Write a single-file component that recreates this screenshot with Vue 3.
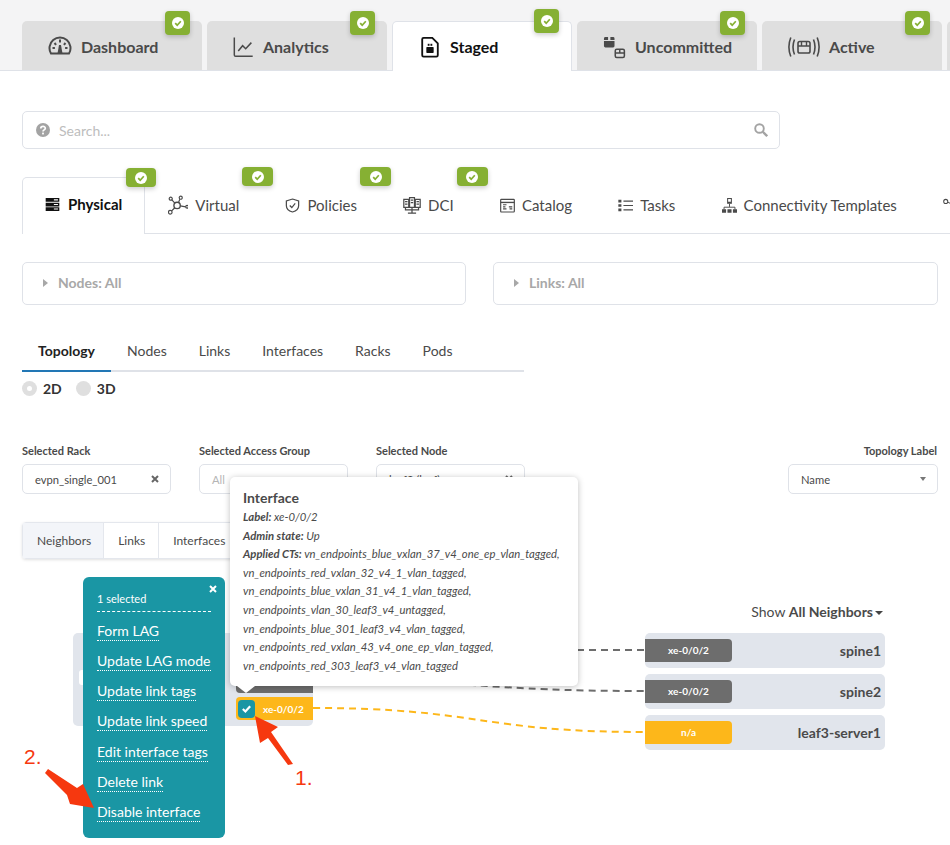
<script setup>
const icons = {
  dashboard: '<path d="M3 18.500A10.500 10.500 0 1 1 21 18.500Z" fill="none" stroke="currentColor" stroke-width="2"/><path d="M12 10l-1 0-1.500 8.500h5L13 10Z" fill="currentColor"/><path d="M12 4.500v3M6.500 8l1.600 1.800M17.500 8l-1.600 1.800M4.500 13h2.400M17.100 13h2.400" stroke="currentColor" stroke-width="2"/>',
  analytics: '<path d="M1.500 1V21a1.500 1.500 0 0 0 1.500 1.500H22.500" fill="none" stroke="currentColor" stroke-width="1.700"/><path d="M6 16.500l5-6 3.500 3.500L21 7" fill="none" stroke="currentColor" stroke-width="1.700"/>',
  staged: '<path d="M5 2h9.500L20.500 8v13a1.500 1.500 0 0 1-1.500 1.500H5A1.500 1.500 0 0 1 3.500 21V3.500A1.500 1.500 0 0 1 5 2Z" fill="none" stroke="currentColor" stroke-width="2"/><rect x="8" y="12" width="8" height="6.500" rx=".8" fill="currentColor"/><rect x="9.500" y="8.500" width="2" height="2.200" fill="currentColor"/><rect x="12.500" y="8.500" width="2" height="2.200" fill="currentColor"/>',
  uncommitted: '<path d="M1 5.800h11v5.200a1.500 1.500 0 0 1-1.500 1.500h-8A1.500 1.500 0 0 1 1 11ZM2.500 1.500h2.800v3.200H1V3A1.500 1.500 0 0 1 2.500 1.500ZM7.700 1.500h2.800A1.500 1.500 0 0 1 12 3v1.700H7.700Z" fill="currentColor"/><rect x="12.800" y="14.300" width="9.500" height="8.700" rx="1.500" fill="none" stroke="currentColor" stroke-width="1.600"/><path d="M13 18.200h9M17.500 14.300v3.900" stroke="currentColor" stroke-width="1.500"/>',
  active: '<rect x="10" y="6.500" width="12" height="11.500" rx="1.800" fill="none" stroke="currentColor" stroke-width="1.600"/><path d="M10 11h12M13.500 6.500V11M18.500 6.500V11" stroke="currentColor" stroke-width="1.400"/><path d="M6.500 4.500Q3.500 12 6.500 19.500M2.800 2.500Q-1 12 2.800 21.500M25.500 4.500Q28.500 12 25.500 19.500M29.200 2.500Q33 12 29.200 21.500" fill="none" stroke="currentColor" stroke-width="1.600"/>',
  physical: '<path d="M2 2.500h20v5.500H2ZM2 9.300h20v5.500H2ZM2 16h20v5.500H2Z" fill="currentColor"/><path d="M14 5.200h6M14 12h6M14 18.700h6" stroke="#fff" stroke-width="1.600"/>',
  virtual: '<circle cx="11" cy="12.500" r="3.500" fill="none" stroke="currentColor" stroke-width="1.500"/><circle cx="4" cy="5" r="1.700" fill="none" stroke="currentColor" stroke-width="1.300"/><circle cx="3.500" cy="20" r="2" fill="none" stroke="currentColor" stroke-width="1.300"/><circle cx="15" cy="4" r="1.700" fill="none" stroke="currentColor" stroke-width="1.300"/><circle cx="22" cy="14" r="1.500" fill="none" stroke="currentColor" stroke-width="1.300"/><path d="M5 6l3.500 4M5 18.500l3.500-3.500M14 5.500L12.500 9.500M14.500 13L20.500 14" stroke="currentColor" stroke-width="1.300"/>',
  policies: '<path d="M12 2.500l9 2.800v7c0 4.800-4 7.700-9 9.200-5-1.500-9-4.400-9-9.200v-7Z" fill="none" stroke="currentColor" stroke-width="1.800"/><path d="M8 12l3 3 5-6" fill="none" stroke="currentColor" stroke-width="1.800"/>',
  dci: '<path d="M2 5h6v10H2ZM9 3h6v12H9ZM16 5h6v10h-6ZM12 15v7M7 22h10M4 15v3h16v-3" fill="none" stroke="currentColor" stroke-width="1.500"/><path d="M3.500 8h3M3.500 11h3M10.500 6h3M10.500 9h3M17.500 8h3M17.500 11h3" stroke="currentColor" stroke-width="1.500"/>',
  catalog: '<rect x="2" y="3" width="20" height="18.500" rx="1" fill="none" stroke="currentColor" stroke-width="1.700"/><path d="M2 7.500h20" stroke="currentColor" stroke-width="2"/><path d="M5.500 11h5M5.500 14h3.500M5.500 17h5M14 14h5M15 17h4" stroke="currentColor" stroke-width="1.600"/>',
  tasks: '<path d="M1.500 3.500h4.500v4H1.500ZM1.500 10h4.500v4H1.500ZM1.500 16.500h4.500v4H1.500Z" fill="currentColor"/><path d="M9 5.500h14M9 12h14M9 18.500h14" stroke="currentColor" stroke-width="1.800"/>',
  templates: '<rect x="8.500" y="1" width="7" height="8.500" fill="currentColor"/><rect x="10" y="2.500" width="4" height="4" fill="#fff"/><path d="M12 9.500v4.500M4 18v-3.500h16V18" fill="none" stroke="currentColor" stroke-width="1.400"/><path d="M1 17.500h6v5H1ZM9 17.500h6v5H9ZM17 17.500h6v5h-6Z" fill="currentColor"/>',
  share: '<circle cx="5" cy="6" r="3" fill="none" stroke="currentColor" stroke-width="1.500"/><path d="M8 7l6 3" stroke="currentColor" stroke-width="1.500"/>',
}

const mainTabs = [
  { label: 'Dashboard', icon: 'dashboard', w: 24 },
  { label: 'Analytics', icon: 'analytics', w: 21 },
  { label: 'Staged', icon: 'staged', w: 22 },
  { label: 'Uncommitted', icon: 'uncommitted', w: 23 },
  { label: 'Active', icon: 'active', w: 32, box: '0 0 32 24' },
]

const subTabs = [
  { label: 'Physical', icon: 'physical', w: 15, active: true, badge: true },
  { label: 'Virtual', icon: 'virtual', w: 20, badge: true },
  { label: 'Policies', icon: 'policies', w: 15, badge: true },
  { label: 'DCI', icon: 'dci', w: 18, badge: true },
  { label: 'Catalog', icon: 'catalog', w: 15 },
  { label: 'Tasks', icon: 'tasks', w: 15 },
  { label: 'Connectivity Templates', icon: 'templates', w: 15 },
  { label: '', icon: 'share', w: 15 },
]

const viewTabs = ['Topology', 'Nodes', 'Links', 'Interfaces', 'Racks', 'Pods']

const cts = [
  'vn_endpoints_red_vxlan_32_v4_1_vlan_tagged,',
  'vn_endpoints_blue_vxlan_31_v4_1_vlan_tagged,',
  'vn_endpoints_vlan_30_leaf3_v4_untagged,',
  'vn_endpoints_blue_301_leaf3_v4_vlan_tagged,',
  'vn_endpoints_red_vxlan_43_v4_one_ep_vlan_tagged,',
  'vn_endpoints_red_303_leaf3_v4_vlan_tagged',
]

const actions = [
  'Form LAG',
  'Update LAG mode',
  'Update link tags',
  'Update link speed',
  'Edit interface tags',
  'Delete link',
  'Disable interface',
]

const neighbors = [
  { name: 'spine1', port: 'xe-0/0/2', top: 73 },
  { name: 'spine2', port: 'xe-0/0/2', top: 114 },
  { name: 'leaf3-server1', port: 'n/a', top: 155, warn: true },
]
</script>

<template>
  <div class="page">
    <header class="top-bar">
      <div
        v-for="(tab, i) in mainTabs"
        :key="tab.label"
        class="main-tab"
        :class="{ active: i === 2 }"
      >
        <svg :width="tab.w" height="24" :viewBox="tab.box || '0 0 24 24'" class="main-icon" v-html="icons[tab.icon]"></svg>
        <span>{{ tab.label }}</span>
        <span class="badge main-badge">
          <svg viewBox="0 0 12 12" class="check"><circle cx="6" cy="6" r="6" fill="#fff" /><path d="M3.200 6.200l2 2 3.600-4" fill="none" stroke="#86b033" stroke-width="1.700" /></svg>
        </span>
      </div>
      <div class="main-tab stub"></div>
    </header>

    <main class="content">
      <div class="search">
        <svg class="help" viewBox="0 0 14 14">
          <circle cx="7" cy="7" r="7" fill="#a3a3a3" />
          <path d="M4.800 5.400C4.800 2.800 9.300 2.800 9.300 5.300 9.300 6.900 7 6.900 7 8.500" fill="none" stroke="#fff" stroke-width="1.700" />
          <rect x="6.100" y="9.600" width="1.800" height="1.800" fill="#fff" />
        </svg>
        <span class="search-text">Search...</span>
        <svg class="glass" viewBox="0 0 14 14">
          <circle cx="5.500" cy="5.500" r="4.300" fill="none" stroke="#a3a3a3" stroke-width="1.900" />
          <path d="M8.800 8.800l4.400 4.400" stroke="#a3a3a3" stroke-width="2.300" />
        </svg>
      </div>

      <nav class="sub-tabs">
        <div
          v-for="tab in subTabs"
          :key="tab.icon"
          class="sub-tab"
          :class="{ active: tab.active }"
        >
          <svg :width="tab.w" :height="tab.w" viewBox="1 1 22 22" class="sub-icon" v-html="icons[tab.icon]"></svg>
          <span v-if="tab.label">{{ tab.label }}</span>
          <span v-if="tab.badge" class="badge sub-badge">
            <svg viewBox="0 0 12 12" class="check"><circle cx="6" cy="6" r="6" fill="#fff" /><path d="M3.200 6.200l2 2 3.600-4" fill="none" stroke="#86b033" stroke-width="1.700" /></svg>
          </span>
        </div>
      </nav>

      <div class="filters">
        <div class="filter"><i class="caret"></i>Nodes: All</div>
        <div class="filter"><i class="caret"></i>Links: All</div>
      </div>

      <nav class="view-tabs">
        <span
          v-for="(tab, i) in viewTabs"
          :key="tab"
          class="view-tab"
          :class="{ active: i === 0 }"
        >{{ tab }}</span>
      </nav>

      <div class="radios">
        <span class="radio on"></span><b>2D</b>
        <span class="radio"></span><b>3D</b>
      </div>

      <div class="selectors">
        <label class="field">
          <span class="field-label">Selected Rack</span>
          <span class="input">evpn_single_001<svg class="clear" viewBox="0 0 8 8"><path d="M1 1l6 6M7 1L1 7" stroke="#666" stroke-width="2" /></svg></span>
        </label>
        <label class="field">
          <span class="field-label">Selected Access Group</span>
          <span class="input muted">All</span>
        </label>
        <label class="field">
          <span class="field-label">Selected Node</span>
          <span class="input">leaf3 (leaf)<svg class="clear" viewBox="0 0 8 8"><path d="M1 1l6 6M7 1L1 7" stroke="#666" stroke-width="2" /></svg></span>
        </label>
        <label class="field last">
          <span class="field-label">Topology Label</span>
          <span class="input">Name<i class="select-caret"></i></span>
        </label>
      </div>

      <div class="btn-group">
        <span class="btn active">Neighbors</span>
        <span class="btn">Links</span>
        <span class="btn">Interfaces</span>
      </div>
    </main>

    <section class="canvas">
      <div class="show">Show <b>All Neighbors</b><i class="select-caret dark"></i></div>

      <svg class="wires" width="950" height="285" viewBox="0 0 950 285">
        <path d="M313 90H645" class="wire" />
        <path d="M313 120C479 120 479 131 645 131" class="wire" />
        <path d="M313 148C479 148 479 172 645 172" class="wire warn" />
      </svg>

      <div class="node source">
        <span class="chip-stub"></span>
        <span class="port grey"></span>
        <span class="port yellow">
          <span class="tick"><svg viewBox="0 0 12 12"><path d="M2 6.500l2.800 2.700L10 3.500" fill="none" stroke="#fff" stroke-width="2.400" /></svg></span>
          xe-0/0/2
        </span>
      </div>

      <div
        v-for="n in neighbors"
        :key="n.name"
        class="node target"
        :style="{ top: n.top + 'px' }"
      >
        <span class="target-port" :class="{ warn: n.warn }">{{ n.port }}</span>
        <span class="target-name">{{ n.name }}</span>
      </div>

      <aside class="tooltip">
        <h4>Interface</h4>
        <p><b>Label:</b> xe-0/0/2</p>
        <p><b>Admin state:</b> Up</p>
        <p><b>Applied CTs:</b> vn_endpoints_blue_vxlan_37_v4_one_ep_vlan_tagged,</p>
        <p v-for="ct in cts" :key="ct">{{ ct }}</p>
      </aside>

      <aside class="actions">
        <svg class="close" viewBox="0 0 8 8"><path d="M1 1l6 6M7 1L1 7" stroke="#fff" stroke-width="2" /></svg>
        <div class="selected">1 selected</div>
        <div v-for="a in actions" :key="a" class="action"><span>{{ a }}</span></div>
      </aside>

      <svg class="arrows" width="950" height="285" viewBox="0 0 950 285">
        <path d="M255 156L278 167 271 172 293 204 288 205 268 178 260 183Z" fill="#f6380f" />
        <path d="M94 248L70 244 67 235 45 213 48 209 77 228 83 224Z" fill="#f6380f" />
      </svg>
      <span class="step step-one">1.</span>
      <span class="step step-two">2.</span>
    </section>
  </div>
</template>

<style scoped>
.page {
  width: 950px;
  height: 845px;
  overflow: hidden;
  background: #fff;
  color: #4a4a4a;
  font-family: Lato, "Liberation Sans", sans-serif;
}

/* top tabs */
.top-bar {
  display: flex;
  align-items: flex-end;
  gap: 5px;
  height: 70px;
  padding-left: 22px;
  background: #f4f4f5;
  border-bottom: 1px solid #dfe2e8;
  box-sizing: content-box;
}

.main-tab {
  position: relative;
  display: flex;
  flex: 0 0 180px;
  align-items: center;
  gap: 9px;
  box-sizing: border-box;
  height: 49px;
  padding: 2px 0 0 26px;
  background: #dfdfdf;
  border-radius: 5px 5px 0 0;
  font-size: 16px;
  font-weight: 700;
  color: #4a4a4a;
}

.main-tab.active {
  height: 50px;
  margin-bottom: -1px;
  padding-bottom: 2px;
  background: #fff;
  border: 1px solid #dfe2e8;
  border-bottom: 0;
  color: #111;
}

.main-tab.stub {
  flex-basis: 20px;
  padding: 0;
}

.main-icon {
  flex: none;
}

.badge {
  position: absolute;
  display: flex;
  align-items: center;
  justify-content: center;
  background: #86b033;
  border-radius: 4px;
  box-shadow: 0 2px 5px rgba(0, 0, 0, 0.2);
}

.main-badge {
  top: -10px;
  right: 12px;
  width: 25px;
  height: 24px;
}

.main-tab.active .main-badge {
  top: -13px;
}

.check {
  width: 12px;
  height: 12px;
}

/* search */
.content {
  padding: 40px 0 0 22px;
}

.search {
  display: flex;
  align-items: center;
  box-sizing: border-box;
  width: 758px;
  height: 38px;
  padding: 0 11px 0 13px;
  border: 1px solid #dfe2e8;
  border-radius: 5px;
}

.help {
  width: 14px;
  height: 14px;
}

.search-text {
  margin-left: 9px;
  font-size: 14px;
  color: #bdbdbd;
}

.glass {
  width: 14px;
  height: 14px;
  margin-left: auto;
}

/* second tabs */
.sub-tabs {
  display: flex;
  height: 57px;
  margin-top: 28px;
  border-bottom: 1px solid #dfe2e8;
  box-sizing: border-box;
}

.sub-tab {
  position: relative;
  display: flex;
  align-items: center;
  gap: 7px;
  padding: 0 23.100px;
  font-size: 15px;
  white-space: nowrap;
}

.sub-tab.active {
  gap: 8px;
  height: 57px;
  padding: 0 22px 4px;
  background: #fff;
  border: 1px solid #dfe2e8;
  border-bottom: 0;
  border-radius: 5px 0 0 0;
  box-sizing: border-box;
  font-weight: 700;
  color: #111;
}

.sub-icon {
  flex: none;
}

.sub-badge {
  top: -10px;
  right: -11px;
  z-index: 1;
  width: 31px;
  height: 19px;
}

.sub-tab.active .sub-badge {
  right: -12px;
  width: 30px;
}

/* filters */
.filters {
  display: flex;
  gap: 27px;
  margin-top: 28px;
}

.filter {
  display: flex;
  align-items: center;
  box-sizing: border-box;
  width: 444px;
  height: 43px;
  padding: 0 0 2px 20px;
  border: 1px solid #dfe2e8;
  border-radius: 5px;
  font-size: 14px;
  font-weight: 700;
  color: #a8a8a8;
}

.filter + .filter {
  width: 445px;
}

.caret {
  margin-right: 10px;
  border-top: 4px solid transparent;
  border-bottom: 4px solid transparent;
  border-left: 5px solid #a8a8a8;
}

/* topology tabs */
.view-tabs {
  display: flex;
  width: 502px;
  height: 31px;
  margin-top: 34px;
  border-bottom: 2px solid #dfe2e8;
}

.view-tab {
  height: 33px;
  padding: 1px 16px 0;
  box-sizing: border-box;
  font-size: 14px;
  line-height: 22px;
}

.view-tab.active {
  border-bottom: 2px solid #2277b5;
  font-weight: 700;
  color: #222;
}

.radios {
  display: flex;
  align-items: center;
  height: 18px;
  margin-top: 7px;
  font-size: 14px;
  color: #333;
}

.radio {
  position: relative;
  width: 15px;
  height: 15px;
  margin-right: 6px;
  background: #dfdfdf;
  border-radius: 50%;
}

.radio.on::after {
  content: "";
  position: absolute;
  top: 5px;
  left: 5px;
  width: 5px;
  height: 5px;
  background: #fff;
  border-radius: 50%;
}

.radios b + .radio {
  margin-left: 14px;
}

/* selectors */
.selectors {
  display: flex;
  gap: 28px;
  margin-top: 47px;
  padding-right: 12px;
}

.field {
  display: flex;
  flex-direction: column;
  gap: 6px;
  width: 149px;
}

.field.last {
  width: 150px;
  margin-left: auto;
  text-align: right;
}

.field-label {
  font-size: 11px;
  font-weight: 700;
  line-height: 14px;
  white-space: nowrap;
}

.field.last .field-label {
  padding-right: 1px;
}

.input {
  position: relative;
  display: flex;
  align-items: center;
  justify-content: space-between;
  box-sizing: border-box;
  height: 30px;
  padding: 0 11px 0 12px;
  border: 1px solid #dfe2e8;
  border-radius: 5px;
  font-size: 11.200px;
}

.input.muted {
  color: #b5b5b5;
}

.clear {
  width: 8px;
  height: 8px;
}

.select-caret {
  border-top: 4px solid #777;
  border-left: 3.500px solid transparent;
  border-right: 3.500px solid transparent;
}

.select-caret.dark {
  display: inline-block;
  margin-left: 2px;
  vertical-align: 2px;
  border-top-color: #444;
  border-left-width: 4px;
  border-right-width: 4px;
}

/* button group */
.btn-group {
  display: inline-flex;
  height: 37px;
  margin-top: 28px;
  border: 1px solid #e4e7ed;
  border-radius: 4px;
  box-sizing: border-box;
  box-shadow: 0 1px 3px rgba(0, 0, 0, 0.12);
  font-size: 12px;
}

.btn {
  display: flex;
  align-items: center;
  padding: 0 13px 1px 14px;
  border-right: 1px solid #e4e7ed;
}

.btn.active {
  padding-right: 12px;
  background: #f3f5f9;
}

/* diagram */
.canvas {
  position: relative;
  height: 285px;
  margin-top: 1px;
}

.show {
  position: absolute;
  top: 43px;
  right: 67px;
  font-size: 14px;
  line-height: 18px;
}

.wires,
.arrows {
  position: absolute;
  top: 0;
  left: 0;
  pointer-events: none;
}

.arrows {
  z-index: 4;
}

.wire {
  fill: none;
  stroke: #6d6d6d;
  stroke-width: 2;
  stroke-dasharray: 7 5;
}

.wire.warn {
  stroke: #fdb71a;
}

.node {
  position: absolute;
  background: #e1e5ec;
  border-radius: 5px;
}

.source {
  top: 73px;
  left: 73px;
  width: 240px;
  height: 93px;
}

.chip-stub {
  position: absolute;
  top: 37px;
  left: 6px;
  width: 10px;
  height: 15px;
  background: #fff;
  border-radius: 3px;
}

.port {
  position: absolute;
  left: 163px;
  width: 77px;
  height: 23px;
  border-radius: 4px 0 0 4px;
}

.port.grey {
  top: 37px;
  background: #6d6d6d;
}

.port.yellow {
  top: 64px;
  display: flex;
  align-items: center;
  gap: 8px;
  padding-left: 2px;
  box-sizing: border-box;
  background: #fdb71a;
  font-size: 10px;
  font-weight: 700;
  color: #fff;
}

.tick {
  display: flex;
  align-items: center;
  justify-content: center;
  width: 17px;
  height: 18px;
  background: #1a96a4;
  border-radius: 4px;
}

.tick svg {
  width: 11px;
  height: 11px;
}

.target {
  left: 645px;
  display: flex;
  align-items: center;
  justify-content: space-between;
  box-sizing: border-box;
  width: 240px;
  height: 35px;
  padding-right: 4px;
}

.target-port {
  width: 87px;
  height: 23px;
  background: #6d6d6d;
  border-radius: 0 4px 4px 0;
  font-size: 10px;
  font-weight: 700;
  line-height: 23px;
  text-align: center;
  color: #fff;
}

.target-port.warn {
  background: #fdb71a;
}

.target-name {
  font-size: 14px;
  font-weight: 700;
}

.tooltip {
  position: absolute;
  top: -83px;
  left: 230px;
  z-index: 2;
  box-sizing: border-box;
  width: 348px;
  height: 209px;
  padding: 11px 13px;
  background: #fff;
  border-radius: 5px;
  box-shadow: 0 1px 6px rgba(0, 0, 0, 0.25);
  font-size: 11.300px;
  font-style: italic;
  line-height: 18.600px;
  white-space: nowrap;
}

.tooltip::after {
  content: "";
  position: absolute;
  top: 100%;
  left: 7px;
  border-top: 7px solid #fff;
  border-left: 9px solid transparent;
  border-right: 9px solid transparent;
}

.tooltip h4 {
  margin: 0;
  font-size: 14px;
  font-style: normal;
  font-weight: 700;
  line-height: 20px;
}

.tooltip p {
  margin: 0;
}

.actions {
  position: absolute;
  top: 17px;
  left: 83px;
  z-index: 3;
  box-sizing: border-box;
  width: 142px;
  height: 261px;
  padding: 15px 14px 0;
  background: #1a96a4;
  border-radius: 6px;
  color: #fff;
}

.close {
  position: absolute;
  top: 8px;
  right: 8px;
  width: 8px;
  height: 8px;
}

.selected {
  height: 19px;
  border-bottom: 1px dashed #fff;
  font-size: 11px;
  line-height: 14px;
}

.action {
  height: 30.300px;
  padding-top: 9.500px;
  box-sizing: border-box;
  font-size: 14px;
  line-height: 18px;
  white-space: nowrap;
}

.action span {
  display: inline-block;
  border-bottom: 1px dotted #fff;
}

.step {
  position: absolute;
  z-index: 4;
  font-family: "Liberation Sans", sans-serif;
  font-size: 21px;
  line-height: 24px;
  color: #f6380f;
}

.step-one {
  top: 206px;
  left: 295px;
}

.step-two {
  top: 185px;
  left: 24px;
}
</style>

<style>
body {
  overflow: hidden;
}
</style>
